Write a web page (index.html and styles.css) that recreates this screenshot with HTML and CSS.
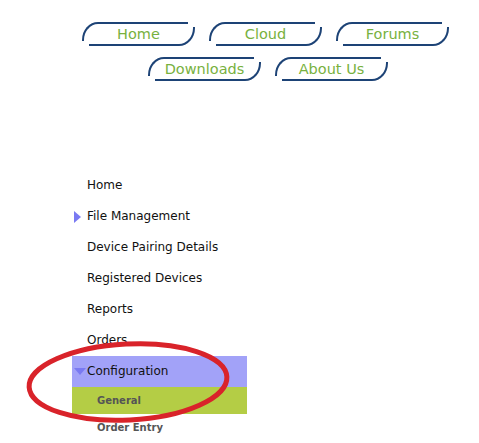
FILE: index.html
```html
<!DOCTYPE html>
<html>
<head>
<meta charset="utf-8">
<link rel="stylesheet" href="styles.css">
</head>
<body>
<div class="page">
  <nav class="topnav">
    <div class="navrow">
      <a class="pill" href="#">Home</a>
      <a class="pill" href="#">Cloud</a>
      <a class="pill" href="#">Forums</a>
    </div>
    <div class="navrow second">
      <a class="pill" href="#">Downloads</a>
      <a class="pill" href="#">About Us</a>
    </div>
  </nav>
  <ul class="menu">
    <li class="item">Home</li>
    <li class="item collapsed">File Management</li>
    <li class="item">Device Pairing Details</li>
    <li class="item">Registered Devices</li>
    <li class="item">Reports</li>
    <li class="item">Orders</li>
    <li class="item expanded active">Configuration</li>
    <li class="sub current">General</li>
    <li class="sub">Order Entry</li>
  </ul>
  <svg class="circle" width="210" height="92" viewBox="0 0 210 92">
    <ellipse cx="105" cy="43" rx="99" ry="38" fill="none" stroke="#d9232a" stroke-width="5" transform="rotate(-3 105 43)"/>
  </svg>
</div>
</body>
</html>
```
FILE: styles.css
```css
html, body {
  margin: 0;
  padding: 0;
  background: #fff;
}
.page {
  position: relative;
  width: 479px;
  height: 443px;
  overflow: hidden;
  font-family: "DejaVu Sans", Verdana, sans-serif;
}
.topnav {
  padding: 22px 0 0 52px;
  display: flex;
  flex-direction: column;
  gap: 11px;
}
.navrow {
  display: flex;
  justify-content: center;
  gap: 14px;
}
.navrow.second {
  padding-left: 5px;
}
.pill {
  position: relative;
  display: flex;
  align-items: center;
  justify-content: center;
  width: 113px;
  height: 24px;
  color: #78b13e;
  font-size: 14.5px;
  text-decoration: none;
}
.pill::before {
  content: "";
  position: absolute;
  left: 0;
  top: 0;
  width: 94%;
  height: 78%;
  border-top: 2px solid #1d4376;
  border-left: 2px solid #1d4376;
  border-top-left-radius: 16px 18px;
  box-sizing: border-box;
}
.pill::after {
  content: "";
  position: absolute;
  right: 0;
  bottom: 0;
  width: 94%;
  height: 78%;
  border-bottom: 2px solid #1d4376;
  border-right: 2px solid #1d4376;
  border-bottom-right-radius: 16px 18px;
  box-sizing: border-box;
}
.menu {
  list-style: none;
  margin: 0;
  padding: 0;
  margin-top: 89px;
  margin-left: 72px;
  width: 175px;
}
.item {
  position: relative;
  height: 31px;
  line-height: 31px;
  padding-left: 15px;
  font-size: 12px;
  color: #111;
}
.item.collapsed::before {
  content: "";
  position: absolute;
  left: 2px;
  top: 10px;
  border-left: 7px solid #7a7af2;
  border-top: 6px solid transparent;
  border-bottom: 6px solid transparent;
}
.item.expanded::before {
  content: "";
  position: absolute;
  left: 2px;
  top: 12px;
  border-top: 7px solid #7a7af2;
  border-left: 6px solid transparent;
  border-right: 6px solid transparent;
}
.item.active {
  background: #a2a2f8;
}
.sub {
  height: 27px;
  line-height: 27px;
  padding-left: 25px;
  font-size: 10px;
  font-weight: bold;
  color: #555;
}
.sub.current {
  background: #b4cd45;
}
.circle {
  position: absolute;
  left: 23px;
  top: 339px;
}
```
